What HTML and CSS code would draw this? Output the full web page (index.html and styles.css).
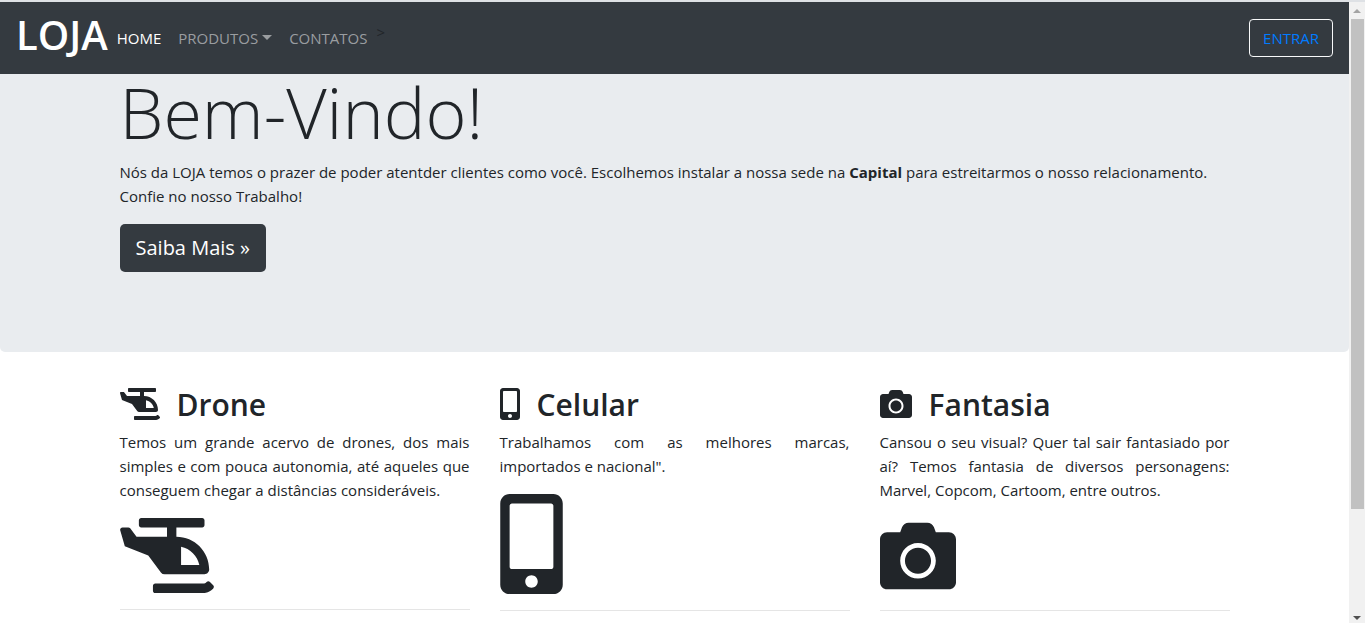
FILE: index.html
```
<!DOCTYPE html>
<html lang="pt-br">
<head>
<meta charset="UTF-8">
<meta name="viewport" content="width=device-width, initial-scale=1.0">
<title>Loja</title>
<link rel="stylesheet" href="styles.css">
</head>
<body>
<!-- icones usados nos cards -->
<svg class="sprite" aria-hidden="true">
    <symbol id="helicopter" viewBox="0 0 640 512"><path d="M304 384h272c17.67 0 32-14.33 32-32 0-123.71-100.29-224-224-224V64h176c8.84 0 16-7.16 16-16V16c0-8.84-7.16-16-16-16H144c-8.84 0-16 7.16-16 16v32c0 8.84 7.16 16 16 16h176v64H112L68.8 70.4C65.78 66.37 61.03 64 56 64H16.01C5.6 64-2.04 73.78.49 83.88L32 192l160 64 86.4 115.2A31.992 31.992 0 0 0 304 384zm112-188.49C478.55 208.3 528.03 257.44 540.79 320H416V195.51zm219.37 263.3l-22.15-22.2c-6.25-6.26-16.24-6.1-22.64.01-7.09 6.77-13.84 11.25-24.64 11.25H240c-8.84 0-16 7.18-16 16.03v32.06c0 8.85 7.16 16.03 16 16.03h325.94c14.88 0 35.3-.47 68.45-29.52 7.02-6.14 7.57-17.05.98-23.66z"/></symbol>
    <symbol id="mobile" viewBox="0 0 320 512"><path d="M272 0H48C21.5 0 0 21.5 0 48v416c0 26.5 21.5 48 48 48h224c26.5 0 48-21.5 48-48V48c0-26.5-21.5-48-48-48zM160 480c-17.7 0-32-14.3-32-32s14.3-32 32-32 32 14.3 32 32-14.3 32-32 32zm112-108c0 6.6-5.4 12-12 12H60c-6.6 0-12-5.4-12-12V60c0-6.6 5.4-12 12-12h200c6.6 0 12 5.4 12 12v312z"/></symbol>
    <symbol id="camera" viewBox="0 0 512 512"><path d="M512 144v288c0 26.5-21.5 48-48 48H48c-26.5 0-48-21.5-48-48V144c0-26.5 21.5-48 48-48h88l12.3-32.9c7-18.7 24.9-31.1 44.9-31.1h125.5c20 0 37.9 12.4 44.9 31.1L376 96h88c26.5 0 48 21.5 48 48zM376 288c0-66.2-53.8-120-120-120s-120 53.8-120 120 53.8 120 120 120 120-53.8 120-120zm-32 0c0 48.5-39.5 88-88 88s-88-39.5-88-88 39.5-88 88-88 88 39.5 88 88z"/></symbol>
</svg>

<div class="page">
    <nav class="navbar">
        <a class="brand" href="#">LOJA</a>
        <ul class="nav-links">
            <li><a class="active" href="#">HOME</a></li>
            <li><a class="dropdown" href="#">PRODUTOS</a></li>
            <li><a href="#">CONTATOS</a></li>
            <li class="stray">&gt;</li>
        </ul>
        <button class="btn-login" type="button">ENTRAR</button>
    </nav>

    <div class="jumbotron">
        <div class="container">
            <h1>Bem-Vindo!</h1>
            <p>Nós da LOJA temos o prazer de poder atentder clientes como você. Escolhemos instalar a nossa sede na <strong>Capital</strong> para estreitarmos o nosso relacionamento. Confie no nosso Trabalho!</p>
            <a class="btn-more" href="#">Saiba Mais »</a>
        </div>
    </div>

    <main class="container row">
        <section class="card">
            <h2><svg class="icon wide"><use href="#helicopter"/></svg>Drone</h2>
            <p>Temos um grande acervo de drones, dos mais simples e com pouca autonomia, até aqueles que conseguem chegar a distâncias consideráveis.</p>
            <svg class="picture drone"><use href="#helicopter"/></svg>
            <hr>
        </section>
        <section class="card">
            <h2><svg class="icon narrow"><use href="#mobile"/></svg>Celular</h2>
            <p>Trabalhamos com as melhores marcas, importados e nacional".</p>
            <svg class="picture phone"><use href="#mobile"/></svg>
            <hr>
        </section>
        <section class="card">
            <h2><svg class="icon"><use href="#camera"/></svg>Fantasia</h2>
            <p>Cansou o seu visual? Quer tal sair fantasiado por aí? Temos fantasia de diversos personagens: Marvel, Copcom, Cartoom, entre outros.</p>
            <svg class="picture camera"><use href="#camera"/></svg>
            <hr>
        </section>
    </main>
</div>

<div class="scrollbar" aria-hidden="true">
    <span class="arrow up"></span>
    <div class="track"><div class="thumb"></div></div>
    <span class="arrow down"></span>
</div>
</body>
</html>
```
FILE: styles.css
```
* {
    box-sizing: border-box;
}
body {
    margin: 0;
    display: flex;
    height: 100vh;
    overflow: hidden;
    border-top: 2px solid #dee1e5;
    background-color: #fff;
    color: #212529;
    font-family: "Segoe UI", "Open Sans", sans-serif;
    font-size: 15px;
    line-height: 24px;
}
h1, h2, p, ul {
    margin: 0;
    padding: 0;
}
a {
    text-decoration: none;
}
.sprite {
    position: absolute;
    width: 0;
    height: 0;
}
.page {
    flex: 1;
    min-width: 0;
    overflow: hidden;
}

/* menu */
.navbar {
    display: flex;
    align-items: center;
    height: 72px;
    padding: 0 16px;
    background-color: #343a40;
}
.brand {
    margin-right: 9px;
    padding-bottom: 6px;
    color: #fff;
    font-size: 40px;
    font-weight: 600;
    line-height: 48px;
}
.nav-links {
    display: flex;
    flex: 1;
    gap: 17px;
    list-style: none;
}
.nav-links a {
    color: #9a9da0;
}
.nav-links .active {
    color: #fff;
}
.dropdown::after {
    content: "";
    display: inline-block;
    margin-left: 4px;
    vertical-align: 4px;
    border-top: 5px solid;
    border-left: 5px solid transparent;
    border-right: 5px solid transparent;
}
.stray {
    margin-left: -8px;
    line-height: 12px;
}
.btn-login {
    height: 38px;
    padding: 0 13px;
    border: 1px solid #f8f9fa;
    border-radius: 4px;
    background-color: transparent;
    color: #007bff;
    font: inherit;
    cursor: pointer;
}

/* banner */
.container {
    max-width: 1140px;
    margin: 0 auto;
    padding: 0 15px;
}
.jumbotron {
    padding-bottom: 80px;
    border-radius: 0 0 5px 5px;
    background-color: #e9ecef;
}
.jumbotron h1 {
    margin-bottom: 10px;
    font-size: 70px;
    font-weight: 300;
    line-height: 76px;
}
.jumbotron p {
    margin-bottom: 16px;
}
.btn-more {
    display: inline-block;
    height: 48px;
    padding: 0 16px;
    border-radius: 5px;
    background-color: #343a40;
    color: #fff;
    font-size: 20px;
    line-height: 48px;
    vertical-align: top;
}

/* cards */
.row {
    display: grid;
    grid-template-columns: repeat(3, 1fr);
    gap: 30px;
    padding-top: 32px;
}
.card h2 {
    display: flex;
    align-items: center;
    gap: 17px;
    padding-top: 2px;
    margin-bottom: 6px;
    font-size: 30px;
    font-weight: 600;
    line-height: 38px;
}
.card p {
    margin-bottom: 16px;
    text-align: justify;
}
.icon {
    width: 32px;
    height: 32px;
    margin-bottom: 2px;
    fill: currentColor;
}
.wide {
    width: 40px;
}
.narrow {
    width: 20px;
}
.picture {
    display: block;
    fill: currentColor;
}
.drone {
    width: 94px;
    height: 75px;
}
.phone {
    width: 63px;
    height: 100px;
}
.camera {
    width: 76px;
    height: 76px;
}
hr {
    margin: 16px 0;
    border: 0;
    border-top: 1px solid #e5e5e5;
}

/* barra de rolagem */
.scrollbar {
    display: flex;
    flex-direction: column;
    align-items: center;
    width: 16px;
    background-color: #f1f1f1;
}
.track {
    flex: 1;
    width: 13px;
}
.thumb {
    height: 83%;
    background-color: #c1c1c1;
}
.arrow {
    margin: 7px 0 6px;
    border-left: 4px solid transparent;
    border-right: 4px solid transparent;
}
.up {
    border-bottom: 4px solid #a3a3a3;
}
.down {
    border-top: 4px solid #505050;
    margin-bottom: 3px;
}
```
